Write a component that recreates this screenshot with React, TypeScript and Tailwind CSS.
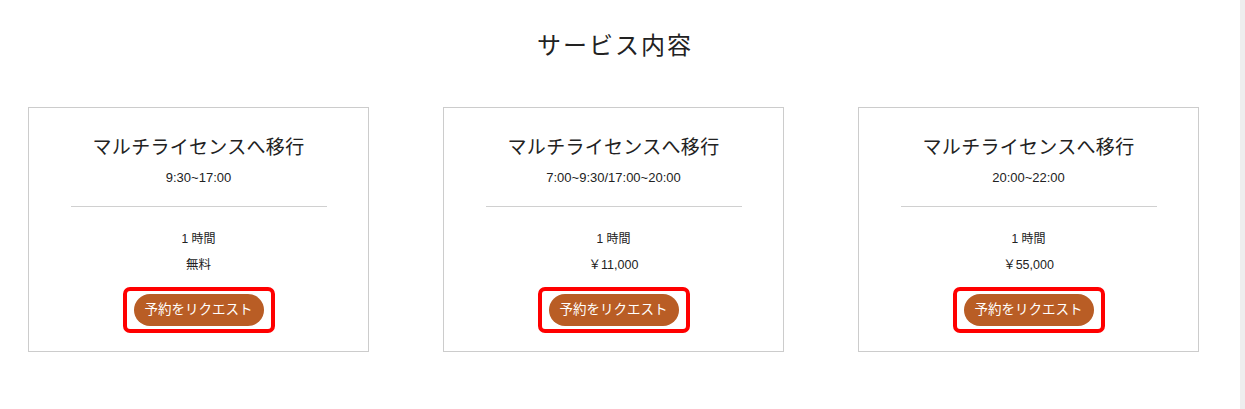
const services = [
  { time: '9:30~17:00', price: '無料' },
  { time: '7:00~9:30/17:00~20:00', price: '￥11,000' },
  { time: '20:00~22:00', price: '￥55,000' },
];

function ServiceCard({ time, price }: { time: string; price: string }) {
  return (
    <div className="flex h-[245px] w-[341px] flex-col items-center border border-[#cccccc] bg-white">
      <h3 className="mt-[26px] text-[19px] leading-[28px] tracking-[0.3px] text-[#222]">マルチライセンスへ移行</h3>
      <p className="mt-[6px] text-[13px] leading-[20px] text-[#222]">{time}</p>
      <div className="mt-[18px] h-px w-[256px] bg-[#d0d0d0]" />
      <p className="mt-[23px] text-[12px] leading-[18px] text-[#222]">1 時間</p>
      <p className="mt-[8px] text-[12.5px] leading-[18px] text-[#222]">{price}</p>
      <div className="mt-[13px] rounded-[7px] border-[4px] border-[#ff0000] px-[7px] py-[3px]">
        <button className="h-[32px] w-[130px] rounded-full bg-[#b95d25] text-[13.5px] text-white">
          予約をリクエスト
        </button>
      </div>
    </div>
  );
}

export default function App() {
  return (
    <div
      className="flex h-[409px] w-full bg-white"
      style={{ fontFamily: '"Liberation Sans", "Noto Sans CJK JP", sans-serif' }}
    >
      <div className="flex-1">
        <h2 className="pr-[10px] pt-[28px] text-center text-[24px] leading-[36px] tracking-[2px] text-[#222]">サービス内容</h2>
        <div className="mt-[43px] flex gap-[74px] pl-[28px]">
          {services.map((s) => (
            <ServiceCard key={s.time} time={s.time} price={s.price} />
          ))}
        </div>
      </div>
      <div className="w-[5px] bg-[#eeeeee]" />
    </div>
  );
}
